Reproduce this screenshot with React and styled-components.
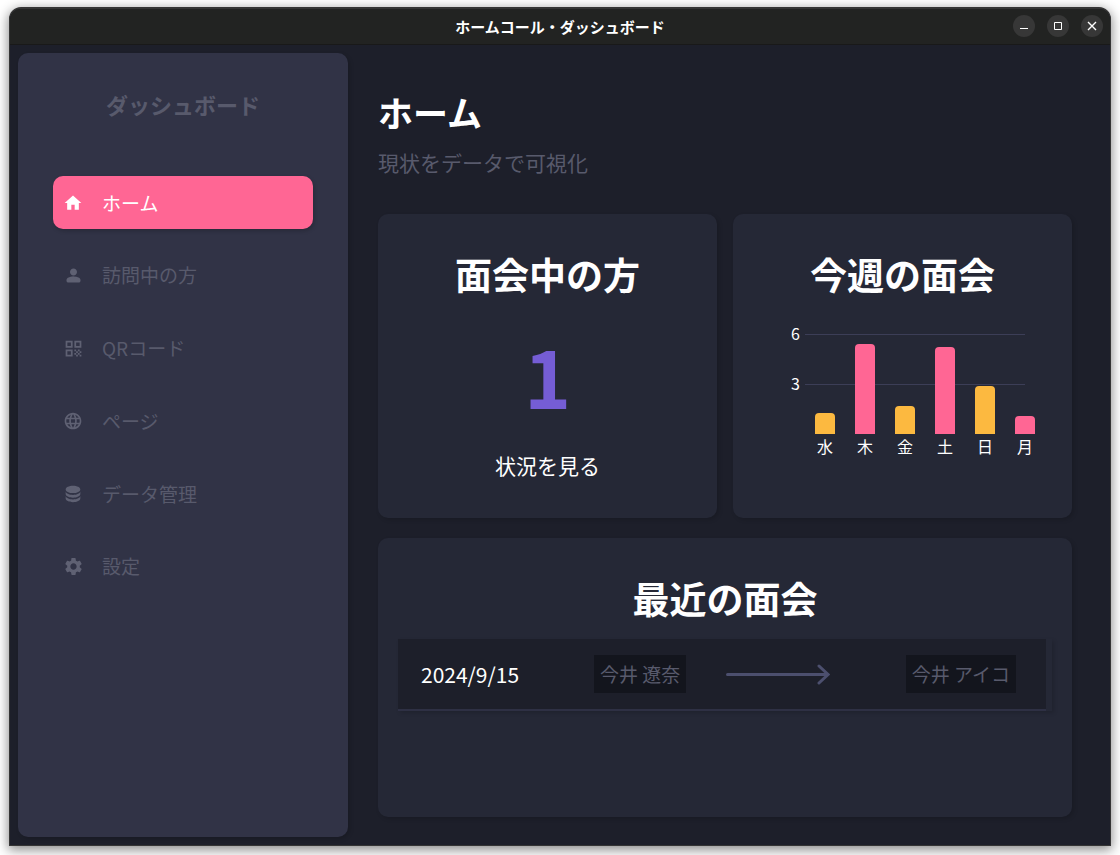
import React from "react";
import styled, { createGlobalStyle } from "styled-components";
import { MdHome, MdQrCode, MdLanguage, MdSettings } from "react-icons/md";

const GlobalStyle = createGlobalStyle`
  * { box-sizing: border-box; }
  body {
    margin: 0;
    background: #fff;
    color: #fff;
    font-family: "Noto Sans CJK JP", "Noto Sans", sans-serif;
  }
  h1, h2, p, ul { margin: 0; padding: 0; }
  ul { list-style: none; }
  a { color: inherit; text-decoration: none; }
  button { border: 0; padding: 0; background: none; color: inherit; font: inherit; cursor: pointer; }
`;

const Desktop = styled.div`
  display: flex;
  min-height: 100vh;
  padding: 7px 9px 9px;
  overflow: hidden;
`;

const Window = styled.div`
  flex: 1;
  display: flex;
  flex-direction: column;
  background: #1d1f2a;
  border: 1px solid #353535;
  border-top-width: 2px;
  border-radius: 12px 12px 0 0;
  box-shadow: 0 3px 12px 1px rgba(0, 0, 0, 0.45);
`;

const TitleBar = styled.header`
  display: grid;
  grid-template-columns: 1fr auto 1fr;
  align-items: center;
  height: 36px;
  padding: 0 7px 2px;
  background: #222322;
  border-bottom: 1px solid #191919;
  border-radius: 10px 10px 0 0;
`;

const WindowTitle = styled.span`
  grid-column: 2;
  padding-top: 2px;
  font-size: 15px;
  line-height: 20px;
  font-weight: 700;
`;

const WindowControls = styled.div`
  display: flex;
  justify-content: flex-end;
  gap: 12px;
`;

const ControlButton = styled.button`
  display: flex;
  width: 22px;
  height: 22px;
  border-radius: 50%;
  background: #373737;
`;

const Body = styled.div`
  flex: 1;
  display: flex;
  padding: 8px;
`;

const Sidebar = styled.aside`
  flex: 0 0 330px;
  padding: 34px 35px;
  background: #313346;
  border-radius: 10px;
  box-shadow: 2px 2px 4px rgba(0, 0, 0, 0.15);
`;

const SidebarTitle = styled.p`
  font-size: 22px;
  line-height: 34px;
  font-weight: 700;
  text-align: center;
  color: #585a6c;
`;

const NavList = styled.ul`
  display: flex;
  flex-direction: column;
  justify-content: space-between;
  min-height: 417px;
  margin-top: 55px;
`;

const NavLink = styled.a`
  display: flex;
  align-items: center;
  gap: 19px;
  height: 53px;
  padding: 0 10px;
  border-radius: 10px;
  font-size: 19px;
  line-height: 28px;
  color: ${(p) => (p.$active ? "#fff" : "#585a6c")};
  background: ${(p) => (p.$active ? "#ff6694" : "transparent")};
  box-shadow: ${(p) => (p.$active ? "1px 2px 4px rgba(0, 0, 0, 0.2)" : "none")};
`;

const NavIcon = styled.span`
  display: flex;
  align-items: center;
  justify-content: center;
  width: 20px;
  height: 20px;
  color: ${(p) => (p.$active ? "#fff" : "#5f6173")};

  svg { flex: none; }
`;

const Main = styled.main`
  flex: 1;
  display: flex;
  flex-direction: column;
  padding: 33px 30px 20px;
`;

const PageTitle = styled.h1`
  font-size: 35px;
  line-height: 52px;
  font-weight: 700;
`;

const Subtitle = styled.p`
  margin-top: 8px;
  font-size: 21px;
  line-height: 32px;
  color: #585a6c;
`;

const CardGrid = styled.div`
  display: grid;
  grid-template-columns: 1fr 1fr;
  gap: 20px 16px;
  flex: 1;
  grid-template-rows: 304px 1fr;
  margin-top: 36px;
`;

const Card = styled.section`
  display: flex;
  flex-direction: column;
  align-items: center;
  grid-column: ${(p) => (p.$wide ? "1 / -1" : "auto")};
  padding: 33px 20px 20px;
  background: #252836;
  border-radius: 10px;
  box-shadow: 2px 2px 4px rgba(0, 0, 0, 0.15);
`;

const CardTitle = styled.h2`
  font-size: 37px;
  line-height: 54px;
  font-weight: 700;
`;

const VisitorCount = styled.p`
  margin-top: 15px;
  font-size: 80px;
  line-height: 116px;
  font-weight: 700;
  color: #755dd5;
`;

const StatusLink = styled.a`
  margin-top: 17px;
  font-size: 21px;
  line-height: 32px;
`;

const Chart = styled.svg`
  margin-top: 13px;
  font-size: 16px;
  fill: #fff;
`;

const VisitList = styled.ul`
  align-self: stretch;
  margin-top: 14px;
  padding-right: 6px;
  box-shadow: 2px 2px 4px rgba(0, 0, 0, 0.15);
`;

const VisitRow = styled.li`
  display: grid;
  grid-template-columns: 173fr 132fr 180fr auto;
  align-items: center;
  height: 72px;
  padding: 0 30px 0 23px;
  background: #1d1f2a;
  border-bottom: 2px solid #2e3044;
`;

const VisitDate = styled.time`
  font-size: 21px;
  line-height: 32px;
`;

const PersonTag = styled.span`
  justify-self: start;
  padding: 5px 6px;
  font-size: 19px;
  line-height: 28px;
  white-space: nowrap;
  color: #585a6c;
  background: #13151d;
`;

const PersonIcon = () => (
  <svg width="21" height="21" viewBox="0 0 24 24" fill="currentColor" aria-hidden="true">
    <path d="M12 12q-1.650 0-2.825-1.175T8 8t1.175-2.825T12 4t2.825 1.175T16 8t-1.175 2.825T12 12M4 18v-.8q0-.85.438-1.562T5.600 14.550q1.550-.775 3.150-1.163T12 13t3.250.388t3.150 1.162q.725.375 1.163 1.088T20 17.200v.8q0 .825-.588 1.413T18 20H6q-.825 0-1.413-.588T4 18" />
  </svg>
);

const DatabaseIcon = () => (
  <svg width="22" height="22" viewBox="0 0 24 24" fill="currentColor" aria-hidden="true">
    <path d="M12 3C7.580 3 4 4.790 4 7s3.580 4 8 4 8-1.790 8-4-3.580-4-8-4M4 9v3c0 2.210 3.580 4 8 4s8-1.790 8-4V9c0 2.210-3.580 4-8 4s-8-1.790-8-4m0 5v3c0 2.210 3.580 4 8 4s8-1.790 8-4v-3c0 2.210-3.580 4-8 4s-8-1.790-8-4" />
  </svg>
);

const navItems = [
  { label: "ホーム", icon: <MdHome size={20} />, active: true },
  { label: "訪問中の方", icon: <PersonIcon /> },
  { label: "QRコード", icon: <MdQrCode size={21} /> },
  { label: "ページ", icon: <MdLanguage size={20} /> },
  { label: "データ管理", icon: <DatabaseIcon /> },
  { label: "設定", icon: <MdSettings size={21} /> },
];

const week = [
  { day: "水", height: 21, color: "#fcb940" },
  { day: "木", height: 90, color: "#ff6694" },
  { day: "金", height: 28, color: "#fcb940" },
  { day: "土", height: 87, color: "#ff6694" },
  { day: "日", height: 48, color: "#fcb940" },
  { day: "月", height: 18, color: "#ff6694" },
];

const visits = [{ date: "2024/9/15", from: "今井 遼奈", to: "今井 アイコ" }];

function WeekChart() {
  return (
    <Chart width="265" height="150" role="img" aria-label="今週の面会">
      <rect x="35" y="20" width="220" height="1" fill="#3c3e57" />
      <rect x="35" y="70" width="220" height="1" fill="#3c3e57" />
      <text x="30" y="26" textAnchor="end">6</text>
      <text x="30" y="76" textAnchor="end">3</text>
      {week.map(({ day, height, color }, i) => {
        const x = 45 + i * 40;
        return (
          <g key={day}>
            <path
              fill={color}
              d={`M${x} 120v-${height - 4}q0-4 4-4h12q4 0 4 4v${height - 4}z`}
            />
            <text x={x + 10} y="139" textAnchor="middle">{day}</text>
          </g>
        );
      })}
    </Chart>
  );
}

function Arrow() {
  return (
    <svg width="104" height="22" viewBox="0 0 104 22" fill="none" stroke="#4c4f6e" strokeWidth="3" strokeLinecap="round" aria-hidden="true">
      <path d="M1.500 11.500H101M93 3l9 8.500L93 20" />
    </svg>
  );
}

function ControlGlyph({ d, weight = 1 }) {
  return (
    <svg width="22" height="22" viewBox="0 0 22 22" fill="none" stroke="#fff" strokeWidth={weight} aria-hidden="true">
      <path d={d} />
    </svg>
  );
}

export default function App() {
  return (
    <>
      <GlobalStyle />
      <Desktop>
        <Window>
          <TitleBar>
            <WindowTitle>ホームコール・ダッシュボード</WindowTitle>
            <WindowControls>
              <ControlButton aria-label="最小化"><ControlGlyph d="M7 13.500h8" /></ControlButton>
              <ControlButton aria-label="最大化"><ControlGlyph d="M7.500 7.500h7v7h-7z" /></ControlButton>
              <ControlButton aria-label="閉じる"><ControlGlyph d="M7 7l8 8M15 7l-8 8" weight={1.4} /></ControlButton>
            </WindowControls>
          </TitleBar>
          <Body>
            <Sidebar>
              <SidebarTitle>ダッシュボード</SidebarTitle>
              <nav>
                <NavList>
                  {navItems.map(({ label, icon, active }) => (
                    <li key={label}>
                      <NavLink href="#" $active={active} aria-current={active ? "page" : undefined}>
                        <NavIcon $active={active}>{icon}</NavIcon>
                        {label}
                      </NavLink>
                    </li>
                  ))}
                </NavList>
              </nav>
            </Sidebar>
            <Main>
              <PageTitle>ホーム</PageTitle>
              <Subtitle>現状をデータで可視化</Subtitle>
              <CardGrid>
                <Card>
                  <CardTitle>面会中の方</CardTitle>
                  <VisitorCount>1</VisitorCount>
                  <StatusLink href="#">状況を見る</StatusLink>
                </Card>
                <Card>
                  <CardTitle>今週の面会</CardTitle>
                  <WeekChart />
                </Card>
                <Card $wide>
                  <CardTitle>最近の面会</CardTitle>
                  <VisitList>
                    {visits.map(({ date, from, to }) => (
                      <VisitRow key={date}>
                        <VisitDate>{date}</VisitDate>
                        <PersonTag>{from}</PersonTag>
                        <Arrow />
                        <PersonTag>{to}</PersonTag>
                      </VisitRow>
                    ))}
                  </VisitList>
                </Card>
              </CardGrid>
            </Main>
          </Body>
        </Window>
      </Desktop>
    </>
  );
}
